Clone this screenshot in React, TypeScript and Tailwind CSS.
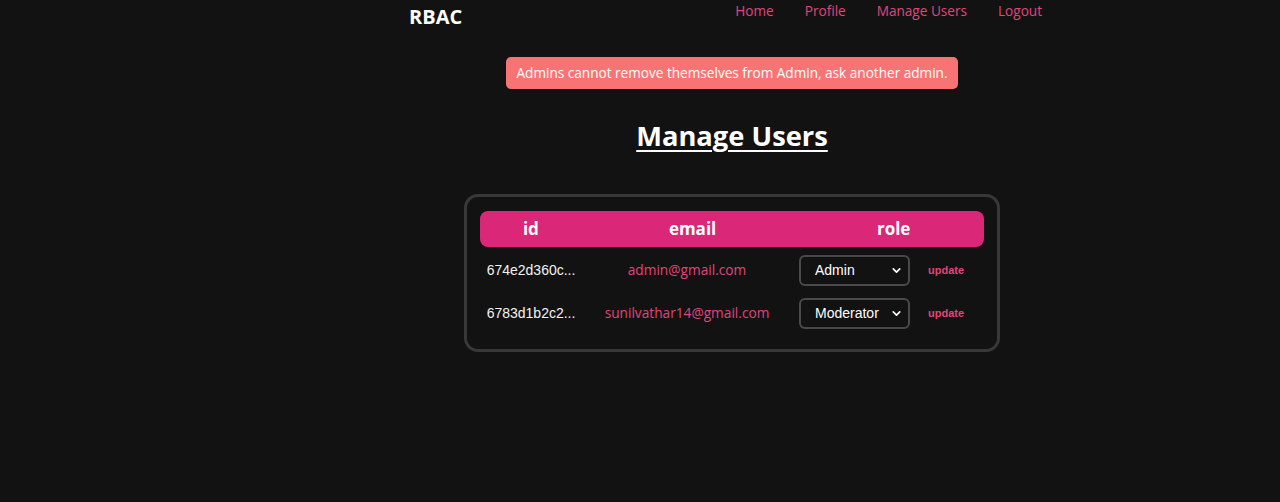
import { ChevronDown } from 'lucide-react'

const users = [
  { id: '674e2d360c...', email: 'admin@gmail.com', role: 'Admin' },
  { id: '6783d1b2c2...', email: 'sunilvathar14@gmail.com', role: 'Moderator' },
]

export default function App() {
  return (
    <div className="min-h-screen w-full bg-[#121212] pl-[184px] text-white font-['Open_Sans',sans-serif]">
      <nav className="flex justify-between pl-[225px] pr-[238px] h-[34px]">
        <div className="pt-[4px] text-[20px] font-bold leading-[26px]">RBAC</div>
        <ul className="flex gap-[31px] pt-[1px] text-[13.6px] leading-[20px] text-[#e0457b]">
          <li>Home</li>
          <li>Profile</li>
          <li>Manage Users</li>
          <li>Logout</li>
        </ul>
      </nav>

      <div className="flex flex-col items-center">
        <div className="mt-[23px] rounded-[5px] bg-[#f87474] px-[10px] py-[6px] text-[13.6px] leading-[20px] text-white">
          Admins cannot remove themselves from Admin, ask another admin.
        </div>

        <h1 className="mt-[28px] text-[27.3px] font-bold leading-[37px] underline underline-offset-[4px] decoration-2">
          Manage Users
        </h1>

        <div className="mt-[40px] w-[536px] rounded-[14px] border-[3px] border-[#383838] px-[13px] pt-[14px] pb-[18px]">
          <div className="flex h-[36px] items-center rounded-[8px] bg-[#db2777] text-[17px] font-bold">
            <div className="w-[102px] text-center">id</div>
            <div className="w-[222px] text-center">email</div>
            <div className="w-[181px] text-center">role</div>
          </div>
          {users.map((u, i) => (
            <div key={u.id} className={`flex h-[36px] items-center ${i === 0 ? 'mt-[5px]' : 'mt-[7px]'}`}>
              <div className="w-[102px] text-center font-['Liberation_Sans',Arial,sans-serif] text-[14px] text-[#f2f2f2]">
                {u.id}
              </div>
              <div className="w-[210px] text-center text-[13.7px] text-[#e0457b]">{u.email}</div>
              <div className="ml-[7px] flex h-[31px] w-[111px] items-center justify-between rounded-[6px] border-2 border-[#4a4a4a] pl-[14px] pr-[5px] font-['Liberation_Sans',Arial,sans-serif] text-[14px] text-white">
                <span>{u.role}</span>
                <ChevronDown size={13} strokeWidth={3} />
              </div>
              <button className="ml-[18px] font-['Liberation_Sans',Arial,sans-serif] text-[11px] font-bold text-[#e0457b]">
                update
              </button>
            </div>
          ))}
        </div>
      </div>
    </div>
  )
}
